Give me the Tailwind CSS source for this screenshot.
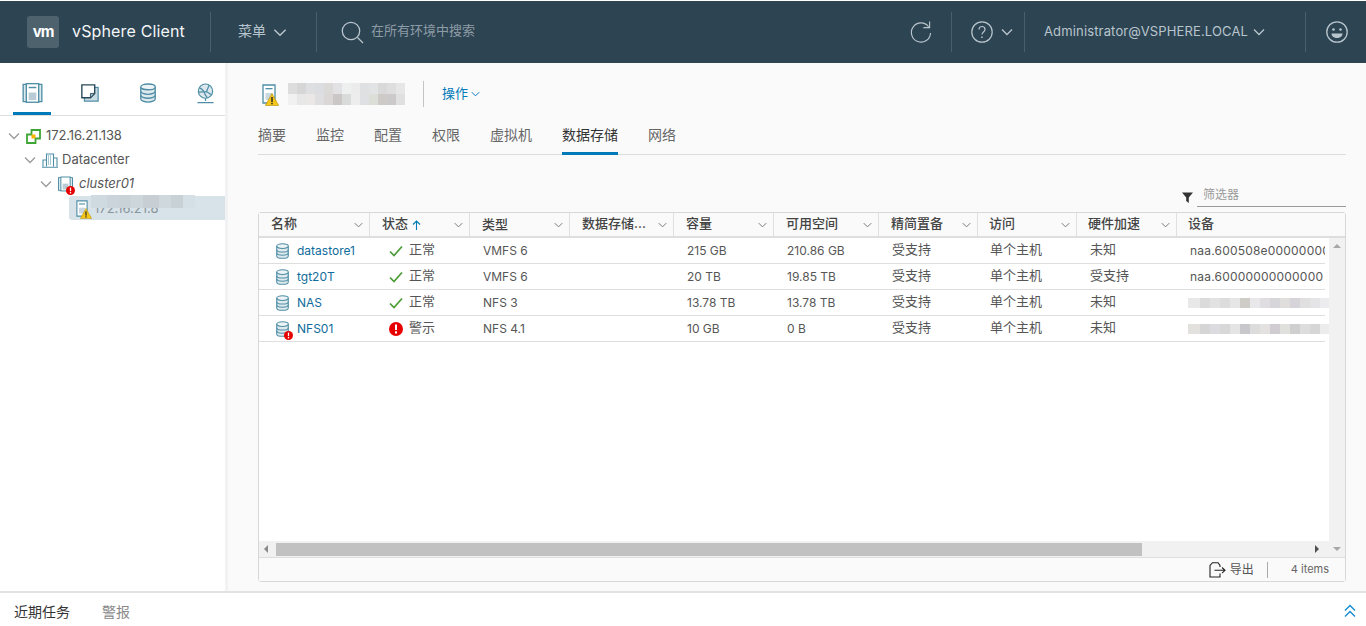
<!DOCTYPE html>
<html lang="zh">
<head>
<meta charset="utf-8">
<script src="https://cdn.jsdelivr.net/npm/@tailwindcss/browser@4"></script>
<title>vSphere Client</title>
</head>
<body class="h-[626px] w-[1366px] overflow-hidden bg-white font-['Inter','Noto_Sans_CJK_SC',sans-serif] text-[13px] text-[#565656]">
<svg class="hidden">
  <symbol id="chev" viewBox="0 0 12 8"><path d="M1 1.500 6 6.500 11 1.500" fill="none" stroke="currentColor" stroke-width="1.300"/></symbol>
  <symbol id="db" viewBox="0 0 16 18"><path d="M1.500 3.500v11c0 1.500 3 2.700 6.500 2.700s6.500-1.200 6.500-2.700v-11" fill="#dfeaef" stroke="#4f8ea5" stroke-width="1.200"/><ellipse cx="8" cy="3.500" rx="6.500" ry="2.600" fill="#eef4f6" stroke="#4f8ea5" stroke-width="1.200"/><path d="M1.500 7.500c0 1.500 3 2.700 6.500 2.700s6.500-1.200 6.500-2.700M1.500 11c0 1.500 3 2.700 6.500 2.700s6.500-1.200 6.500-2.700" fill="none" stroke="#4f8ea5" stroke-width="1.200"/></symbol>
  <symbol id="check" viewBox="0 0 14 12"><path d="M1 6.500 5 10.500 13 1.500" fill="none" stroke="#4b9b34" stroke-width="1.700"/></symbol>
  <symbol id="err" viewBox="0 0 14 14"><circle cx="7" cy="7" r="7" fill="#e60000"/><rect x="6" y="2.500" width="2" height="5.500" fill="#fff"/><rect x="6" y="9.300" width="2" height="2.200" fill="#fff"/></symbol>
  <symbol id="warn" viewBox="0 0 14 13"><path d="M7 .5 13.700 12.500H.3Z" fill="#f5c518" stroke="#b58e0a" stroke-width=".6"/><rect x="6.300" y="4" width="1.400" height="5" fill="#222"/><rect x="6.300" y="9.800" width="1.400" height="1.500" fill="#222"/></symbol>
  <symbol id="host" viewBox="0 0 14 20"><path d="M1 1h12v18H1Z" fill="#fff" stroke="#4f8ea5" stroke-width="1.300"/><rect x="3.500" y="4" width="7" height="1.300" fill="#4f8ea5"/><rect x="3.500" y="9" width="7" height="7" fill="#c9d8de"/></symbol>
</svg>

<div class="mt-px flex h-[62px] items-center bg-[#2d4453] text-[#b9c5cc]">
  <div class="ml-[27px] flex h-8 w-8 items-center justify-center rounded-[3px] bg-[#4d626d] text-[15px] font-bold tracking-[-1px] text-white">vm</div>
  <div class="ml-[13px] mb-[2px] w-[138px] text-[16px] leading-none tracking-[.15px] text-[#f4f6f7]">vSphere Client</div>
  <div class="h-10 w-px bg-[#4a5f6c]"></div>
  <div class="ml-[27px] mb-[3px] text-[14px]">菜单</div>
  <svg class="ml-[7px] h-[9px] w-[14px]"><use href="#chev"/></svg>
  <div class="ml-[29px] h-10 w-px bg-[#4a5f6c]"></div>
  <svg class="ml-6 h-[23px] w-[23px]" viewBox="0 0 23 23" fill="none" stroke="#b9c5cc" stroke-width="1.300"><circle cx="10" cy="10" r="8.700"/><path d="M16.500 16.500 22 22"/></svg>
  <div class="ml-[7px] mb-[2px] text-[13px] text-[#8d9ca6]">在所有环境中搜索</div>
  <div class="flex-1"></div>
  <svg class="h-[24px] w-[23px]" viewBox="0 0 24 24" fill="none" stroke="#b9c5cc" stroke-width="1.200"><path d="M20.500 6.500A10 10 0 1 0 22.500 13"/><path d="M21.500 1v6.500H15"/></svg>
  <div class="ml-[19px] h-10 w-px bg-[#4a5f6c]"></div>
  <svg class="ml-[19px] h-[22px] w-[22px]" viewBox="0 0 22 22" fill="none" stroke="#b9c5cc" stroke-width="1.200"><circle cx="11" cy="11" r="10.200"/><path d="M8 8.500c0-4 6-4 6 0 0 2.500-3 2.500-3 5"/><path d="M11 15.500v1.600" stroke-width="1.500"/></svg>
  <svg class="ml-2 h-2 w-3"><use href="#chev"/></svg>
  <div class="ml-[11px] h-10 w-px bg-[#4a5f6c]"></div>
  <div class="ml-[19px] w-[204px] whitespace-nowrap text-[13px] tracking-[.15px]">Administrator@VSPHERE.LOCAL</div>
  <svg class="ml-[5px] h-2 w-3"><use href="#chev"/></svg>
  <div class="ml-[40px] h-10 w-px bg-[#4a5f6c]"></div>
  <svg class="ml-[20px] mr-[18px] h-[22px] w-[22px]" viewBox="0 0 22 22" fill="none" stroke="#b9c5cc" stroke-width="1.300"><circle cx="11" cy="11" r="10.200"/><circle cx="7.500" cy="8.500" r="1.300" fill="#b9c5cc" stroke="none"/><circle cx="14.500" cy="8.500" r="1.300" fill="#b9c5cc" stroke="none"/><path d="M5.500 12.500h11c0 6-11 6-11 0Z" fill="#b9c5cc" stroke="none"/></svg>
</div>

<div class="flex h-[528px]">
  <aside class="w-[225px] shrink-0 bg-white">
    <div class="flex h-[53px] items-start border-b border-[#dedede]">
      <div class="relative flex h-[52px] w-[64px] justify-center pt-[20px]">
        <svg class="h-[20px] w-[21px]" viewBox="0 0 21 21"><path d="M.7 1.500h6v18h-6ZM14.300 1.500h6v18h-6Z" fill="#dceaf0" stroke="#4f8ea5" stroke-width="1.400"/><rect x="4" y=".7" width="13" height="19.500" fill="#fff" stroke="#4f8ea5" stroke-width="1.400"/><rect x="6.500" y="4" width="8" height="1.500" fill="#4f8ea5"/><rect x="6.500" y="10" width="8" height="8" fill="#b9ccd5"/></svg>
        <div class="absolute bottom-0 left-[13px] h-[3px] w-[38px] bg-[#0079b8]"></div>
      </div>
      <div class="flex w-[52px] justify-center pt-[21px]">
        <svg class="h-[18px] w-[18px]" viewBox="0 0 21 21"><rect x="4" y="4" width="16" height="16" fill="#c9dbe3" stroke="#4f8ea5" stroke-width="1.400"/><path d="M1 1h15v10l-5 5H1Z" fill="#fff" stroke="#27485a" stroke-width="1.600"/><path d="M16 11h-5v5Z" fill="#9dbac7" stroke="#27485a"/></svg>
      </div>
      <div class="flex w-[64px] justify-center pt-[20px]">
        <svg class="h-[20px] w-[18px]"><use href="#db"/></svg>
      </div>
      <div class="flex w-[45px] justify-center pl-[6px] pt-[20px]">
        <svg class="h-[21px] w-[19px]" viewBox="0 0 20 22" fill="none" stroke="#4f8ea5" stroke-width="1.300"><circle cx="10" cy="8.500" r="7.500" fill="#dce8ee"/><path d="M3.500 5c3 1 5 3 6 7l2.500 3.500M14 2 11 9 3 9.500M11 9l5.500 3.500"/><path d="M10 16v3M1.500 20.500h17"/></svg>
      </div>
    </div>
    <div class="pt-[8px] text-[13px] text-[#565656]">
      <div class="flex h-6 items-center pl-2">
        <svg class="h-[8px] w-3 text-[#9a9a9a]"><use href="#chev"/></svg>
        <svg class="ml-[6px] h-[15px] w-[15px]" viewBox="0 0 15 15"><path d="M5.500 1H14v8.500h-4.500V14H1V5.500h4.500Z" fill="#fff" stroke="#3fa535" stroke-width="1.800"/><rect x="5.500" y="5.500" width="4" height="4" fill="#f7b500"/></svg>
        <span class="ml-[5px] tracking-[-.1px]">172.16.21.138</span>
      </div>
      <div class="flex h-6 items-center pl-[24px]">
        <svg class="h-[8px] w-3 text-[#9a9a9a]"><use href="#chev"/></svg>
        <svg class="ml-[6px] h-[15px] w-[16px]" viewBox="0 0 16 15" fill="none" stroke="#4f8ea5" stroke-width="1.100"><path d="M4.500 13.500V1h7v12.500"/><path d="M11.500 5h3.500v8.500M4.500 7H1v6.500M0 14.300h16"/><path d="M6 3h4M6 5h4M6 7h4M6 9h4M6 11h4" stroke-dasharray="1 1"/></svg>
        <span class="ml-[4px]">Datacenter</span>
      </div>
      <div class="flex h-6 items-center pl-10">
        <svg class="h-[8px] w-3 text-[#9a9a9a]"><use href="#chev"/></svg>
        <div class="relative ml-[6px] h-[17px] w-[15px]">
          <svg class="h-[16px] w-[15px]" viewBox="0 0 21 21"><path d="M.7 1.500h6v18h-6ZM14.300 1.500h6v18h-6Z" fill="#dceaf0" stroke="#4f8ea5" stroke-width="1.400"/><rect x="4" y=".7" width="13" height="19.500" fill="#fff" stroke="#4f8ea5" stroke-width="1.400"/><rect x="6.500" y="10" width="8" height="8" fill="#b9ccd5"/></svg>
          <svg class="absolute right-[-2px] bottom-[-2px] h-[9px] w-[9px]"><use href="#err"/></svg>
        </div>
        <span class="ml-[6px] italic">cluster01</span>
      </div>
      <div class="ml-[69px] flex h-6 items-center rounded-l-[3px] bg-[#d8e3e9] pl-[7px]">
        <div class="relative h-[17px] w-[13px]">
          <svg class="h-[17px] w-[12px]"><use href="#host"/></svg>
          <svg class="absolute bottom-[-2px] right-[-3px] h-[11px] w-[12px]"><use href="#warn"/></svg>
        </div>
        <div class="relative ml-[5px] pt-[2px] text-[#8a959b]">172.16.21.8
          <div class="absolute left-[-3px] top-[-2px] flex h-[13px]">
            <div class="h-full w-4 bg-[#cfdae0]"></div><div class="h-full w-3 bg-[#cad4da]"></div><div class="h-full w-3 bg-[#c9d2d6]"></div><div class="h-full w-3 bg-[#cdd6db]"></div><div class="h-full w-4 bg-[#c7cfd4]"></div><div class="h-full w-3 bg-[#ced8dd]"></div><div class="h-full w-3 bg-[#c7d1d6]"></div><div class="h-full w-3 bg-[#d5e0e6]"></div>
          </div>
        </div>
      </div>
    </div>
  </aside>

  <main class="flex min-w-0 flex-1 flex-col border-l-[3px] border-[#f2f2f2] bg-[#fafafa] pl-[30px] pr-5">
    <div class="ml-1 flex h-[60px] items-center pt-[1px]">
      <div class="relative h-5 w-[14px]">
        <svg class="h-5 w-[14px]"><use href="#host"/></svg>
        <svg class="absolute bottom-[-2px] left-[3px] h-[13px] w-[14px]"><use href="#warn"/></svg>
      </div>
      <div class="ml-[12px] grid h-[22px] w-[117px] grid-cols-[repeat(13,9px)] grid-rows-2">
        <div class="bg-[#ddd]"></div><div class="bg-[#d6d6d6]"></div><div class="bg-[#dedfe1]"></div><div class="bg-[#dcdde0]"></div><div class="bg-[#dcd9d9]"></div><div class="bg-[#e2e2e4]"></div><div class="bg-[#eef0f0]"></div><div class="bg-[#ececec]"></div><div class="bg-[#dfe0e2]"></div><div class="bg-[#e2e3e4]"></div><div class="bg-[#dad9da]"></div><div class="bg-[#dedede]"></div><div class="bg-[#e6e6e6]"></div>
        <div class="bg-[#f1f1f1]"></div><div class="bg-[#e7e7e7]"></div><div class="bg-[#ece7e7]"></div><div class="bg-[#dfdfe1]"></div><div class="bg-[#dcd7d7]"></div><div class="bg-[#cac7c6]"></div><div class="bg-[#d8dbda]"></div><div class="bg-[#ededed]"></div><div class="bg-[#dee0e3]"></div><div class="bg-[#dcded8]"></div><div class="bg-[#cdcac8]"></div><div class="bg-[#cbc9c9]"></div><div class="bg-[#e0e0e0]"></div>
      </div>
      <div class="ml-[18px] h-[26px] w-px bg-[#c4c4c4]"></div>
      <div class="ml-[18px] text-[13px] text-[#0079b8]">操作</div>
      <svg class="ml-[3px] mt-[1px] h-[6px] w-[9px] text-[#0079b8]"><use href="#chev"/></svg>
    </div>
    <div class="flex h-[32px] gap-[30px] border-b border-[#dcdcdc] text-[14px] leading-[24px] text-[#666]">
      <div>摘要</div><div>监控</div><div>配置</div><div>权限</div><div>虚拟机</div>
      <div class="h-[32px] border-b-[3px] border-[#0079b8] text-[#333]">数据存储</div>
      <div>网络</div>
    </div>
    <div class="flex h-[56px] items-end justify-end pb-[4px]">
      <svg class="mb-[4px] mr-[4px] h-[11px] w-[11px]" viewBox="0 0 11 11"><path d="M0 .5h11L6.800 5.500V11L4.200 9V5.500Z" fill="#333"/></svg>
      <div class="h-[26px] w-[149px] border-b border-[#9a9a9a] pl-[6px] pt-[5px] text-[12px] text-[#9a9a9a]">筛选器</div>
    </div>
    <div class="mt-px flex h-[370px] flex-col rounded-[3px] border border-[#d7d7d7] bg-white text-[12px]">
      <div class="grid h-[25px] shrink-0 grid-cols-[111px_100px_100px_104px_100px_105px_99px_99px_100px_1fr] border-b-2 border-[#dedede] bg-[#fafafa] text-[13px] font-medium text-[#444]">
        <div class="flex items-center justify-between border-r border-[#e0e0e0] pb-[2px] pl-3 pr-[6px]">名称<svg class="mt-[2px] h-[6px] w-[9px] text-[#777]"><use href="#chev"/></svg></div>
        <div class="flex items-center border-r border-[#e0e0e0] pb-[2px] pl-3 pr-[6px]">状态<svg class="ml-[4px] mt-[2px] h-[10px] w-[9px]" viewBox="0 0 9 10" fill="none" stroke="#0079b8" stroke-width="1.100"><path d="M4.500 10V1M1 4.500 4.500 1 8 4.500"/></svg><svg class="ml-auto mt-[2px] h-[6px] w-[9px] text-[#777]"><use href="#chev"/></svg></div>
        <div class="flex items-center justify-between border-r border-[#e0e0e0] pl-3 pr-[6px]"><span class="pt-[1px]">类型</span><svg class="h-[6px] w-[9px] text-[#777]"><use href="#chev"/></svg></div>
        <div class="flex items-center justify-between border-r border-[#e0e0e0] pb-[2px] pl-3 pr-[6px]">数据存储...<svg class="mt-[2px] h-[6px] w-[9px] text-[#777]"><use href="#chev"/></svg></div>
        <div class="flex items-center justify-between border-r border-[#e0e0e0] pb-[2px] pl-3 pr-[6px]">容量<svg class="mt-[2px] h-[6px] w-[9px] text-[#777]"><use href="#chev"/></svg></div>
        <div class="flex items-center justify-between border-r border-[#e0e0e0] pb-[2px] pl-3 pr-[6px]">可用空间<svg class="mt-[2px] h-[6px] w-[9px] text-[#777]"><use href="#chev"/></svg></div>
        <div class="flex items-center justify-between border-r border-[#e0e0e0] pb-[2px] pl-3 pr-[6px]">精简置备<svg class="mt-[2px] h-[6px] w-[9px] text-[#777]"><use href="#chev"/></svg></div>
        <div class="flex items-center justify-between border-r border-[#e0e0e0] pb-[2px] pl-[11px] pr-[6px]">访问<svg class="mt-[2px] h-[6px] w-[9px] text-[#777]"><use href="#chev"/></svg></div>
        <div class="flex items-center justify-between border-r border-[#e0e0e0] pb-[2px] pl-[11px] pr-[6px]">硬件加速<svg class="mt-[2px] h-[6px] w-[9px] text-[#777]"><use href="#chev"/></svg></div>
        <div class="flex items-center pb-[2px] pl-[11px]">设备</div>
      </div>
      <div class="flex min-h-0 flex-1">
        <div class="flex min-w-0 flex-1 flex-col">
          <div class="min-h-0 flex-1 pr-[4px]">
            <div class="grid h-[26px] grid-cols-[111px_100px_100px_104px_100px_105px_99px_99px_100px_1fr] items-center border-b border-[#dedede]">
              <div class="flex items-center pl-[16px]"><svg class="h-[16px] w-[15px]"><use href="#db"/></svg><span class="ml-[7px] text-[#0f6c9c]">datastore1</span></div>
              <div class="flex items-center pl-[19px]"><svg class="h-[12px] w-[14px]"><use href="#check"/></svg><span class="ml-[6px] pb-[2px] text-[13px]">正常</span></div>
              <div class="pl-[13px]">VMFS 6</div><div></div><div class="pl-[13px]">215 GB</div><div class="pl-[13px]">210.86 GB</div><div class="pb-[2px] pl-[13px] text-[13px]">受支持</div><div class="pb-[2px] pl-3 text-[13px]">单个主机</div><div class="pb-[2px] pl-[13px] text-[13px]">未知</div>
              <div class="overflow-hidden whitespace-nowrap pl-[13px] tracking-[.2px]">naa.600508e00000000000</div>
            </div>
            <div class="grid h-[26px] grid-cols-[111px_100px_100px_104px_100px_105px_99px_99px_100px_1fr] items-center border-b border-[#dedede]">
              <div class="flex items-center pl-[16px]"><svg class="h-[16px] w-[15px]"><use href="#db"/></svg><span class="ml-[7px] text-[#0f6c9c]">tgt20T</span></div>
              <div class="flex items-center pl-[19px]"><svg class="h-[12px] w-[14px]"><use href="#check"/></svg><span class="ml-[6px] pb-[2px] text-[13px]">正常</span></div>
              <div class="pl-[13px]">VMFS 6</div><div></div><div class="pl-[13px]">20 TB</div><div class="pl-[13px]">19.85 TB</div><div class="pb-[2px] pl-[13px] text-[13px]">受支持</div><div class="pb-[2px] pl-3 text-[13px]">单个主机</div><div class="pb-[2px] pl-[13px] text-[13px]">受支持</div>
              <div class="overflow-hidden whitespace-nowrap pl-[13px] tracking-[.2px]">naa.60000000000000</div>
            </div>
            <div class="grid h-[26px] grid-cols-[111px_100px_100px_104px_100px_105px_99px_99px_100px_1fr] items-center border-b border-[#dedede]">
              <div class="flex items-center pl-[16px]"><svg class="h-[16px] w-[15px]"><use href="#db"/></svg><span class="ml-[7px] text-[#0f6c9c]">NAS</span></div>
              <div class="flex items-center pl-[19px]"><svg class="h-[12px] w-[14px]"><use href="#check"/></svg><span class="ml-[6px] pb-[2px] text-[13px]">正常</span></div>
              <div class="pl-[13px]">NFS 3</div><div></div><div class="pl-[13px]">13.78 TB</div><div class="pl-[13px]">13.78 TB</div><div class="pb-[2px] pl-[13px] text-[13px]">受支持</div><div class="pb-[2px] pl-3 text-[13px]">单个主机</div><div class="pb-[2px] pl-[13px] text-[13px]">未知</div>
              <div class="flex h-[10px] min-w-0 pl-[11px]">
                <div class="w-3 shrink-0 bg-[#e8e8e8]"></div><div class="w-[10px] shrink-0 bg-[#dbdbdb]"></div><div class="w-[10px] shrink-0 bg-[#e2e2e2]"></div><div class="w-[10px] shrink-0 bg-[#dcdcdc]"></div><div class="w-[10px] shrink-0 bg-[#e6e6e6]"></div><div class="w-[10px] shrink-0 bg-[#cfcbc6]"></div><div class="w-[10px] shrink-0 bg-[#e8e8ea]"></div><div class="w-[10px] shrink-0 bg-[#e0dde0]"></div><div class="w-[10px] shrink-0 bg-[#d6d6da]"></div><div class="w-[10px] shrink-0 bg-[#dfdedd]"></div><div class="w-[10px] shrink-0 bg-[#d6d4d9]"></div><div class="w-[10px] shrink-0 bg-[#e0e0e0]"></div><div class="w-[10px] shrink-0 bg-[#e4e4e6]"></div><div class="w-[10px] shrink-0 bg-[#ececee]"></div>
              </div>
            </div>
            <div class="grid h-[26px] grid-cols-[111px_100px_100px_104px_100px_105px_99px_99px_100px_1fr] items-center border-b border-[#dedede]">
              <div class="flex items-center pl-[16px]"><div class="relative h-[16px] w-[15px]"><svg class="h-[16px] w-[15px]"><use href="#db"/></svg><svg class="absolute bottom-[-3px] right-[-3px] h-[9px] w-[9px]"><use href="#err"/></svg></div><span class="ml-[7px] text-[#0f6c9c]">NFS01</span></div>
              <div class="flex items-center pl-[19px]"><svg class="h-[14px] w-[14px]"><use href="#err"/></svg><span class="ml-[6px] pb-[2px] text-[13px]">警示</span></div>
              <div class="pl-[13px]">NFS 4.1</div><div></div><div class="pl-[13px]">10 GB</div><div class="pl-[13px]">0 B</div><div class="pb-[2px] pl-[13px] text-[13px]">受支持</div><div class="pb-[2px] pl-3 text-[13px]">单个主机</div><div class="pb-[2px] pl-[13px] text-[13px]">未知</div>
              <div class="flex h-[10px] min-w-0 pl-[11px]">
                <div class="w-3 shrink-0 bg-[#e3e1dd]"></div><div class="w-[10px] shrink-0 bg-[#d5d5d5]"></div><div class="w-[10px] shrink-0 bg-[#dcdce0]"></div><div class="w-[10px] shrink-0 bg-[#d8d8d8]"></div><div class="w-[10px] shrink-0 bg-[#e4e4e4]"></div><div class="w-[10px] shrink-0 bg-[#c8c8cc]"></div><div class="w-[10px] shrink-0 bg-[#dcdcdc]"></div><div class="w-[10px] shrink-0 bg-[#e4e2e0]"></div><div class="w-[10px] shrink-0 bg-[#d0ccd2]"></div><div class="w-[10px] shrink-0 bg-[#e0e0dc]"></div><div class="w-[10px] shrink-0 bg-[#cfcfcf]"></div><div class="w-[10px] shrink-0 bg-[#dddddd]"></div><div class="w-[10px] shrink-0 bg-[#d6d6d6]"></div><div class="w-[10px] shrink-0 bg-[#ececec]"></div>
              </div>
            </div>
          </div>
          <div class="flex h-4 shrink-0 items-center bg-[#f1f1f1]">
            <div class="flex w-[17px] justify-center pr-[4px]"><div class="h-0 w-0 border-y-[4px] border-r-[4px] border-y-transparent border-r-[#8a8a8a]"></div></div>
            <div class="h-[13px] w-[866px] bg-[#c1c1c1]"></div>
            <div class="flex-1"></div>
            <div class="flex w-[17px] justify-center pr-[8px]"><div class="h-0 w-0 border-y-[4px] border-l-[4px] border-y-transparent border-l-[#505050]"></div></div>
          </div>
        </div>
        <div class="flex w-[16px] shrink-0 flex-col items-center justify-between bg-[#f1f1f1] py-[6px]">
          <div class="h-0 w-0 border-x-[4px] border-b-[4px] border-x-transparent border-b-[#a8a8a8]"></div>
          <div class="h-0 w-0 border-x-[4px] border-t-[4px] border-x-transparent border-t-[#a8a8a8]"></div>
        </div>
      </div>
      <div class="flex h-[24px] shrink-0 items-center justify-end border-t border-[#dedede] bg-[#fafafa] pr-4 text-[11px]">
        <svg class="h-[16px] w-[17px]" viewBox="0 0 17 16" fill="none" stroke="#222" stroke-width="1.100"><path d="M11 5V3.500L9 .7H3.500L1 3.500V15h10v-3.500"/><path d="M5.500 8.300H16M13 5.500l3 2.800-3 2.800"/></svg>
        <span class="ml-[4px] text-[12px] text-[#555]">导出</span>
        <div class="ml-[13px] h-[16px] w-px bg-[#aaa]"></div>
        <span class="ml-[23px] text-[#666]">4 items</span>
      </div>
    </div>
  </main>
</div>

<div class="flex h-[35px] items-center border-t-2 border-[#e2e2e2] bg-white pl-[14px] pt-[3px] text-[14px]">
  <span class="text-[#333]">近期任务</span>
  <span class="ml-[32px] text-[#888]">警报</span>
  <svg class="ml-auto mr-[10px] h-[14px] w-[12px]" viewBox="0 0 12 14" fill="none" stroke="#1a8fd1" stroke-width="1.500"><path d="M1 6.500 6 1.500l5 5M1 12.500l5-5 5 5"/></svg>
</div>
</body>
</html>
